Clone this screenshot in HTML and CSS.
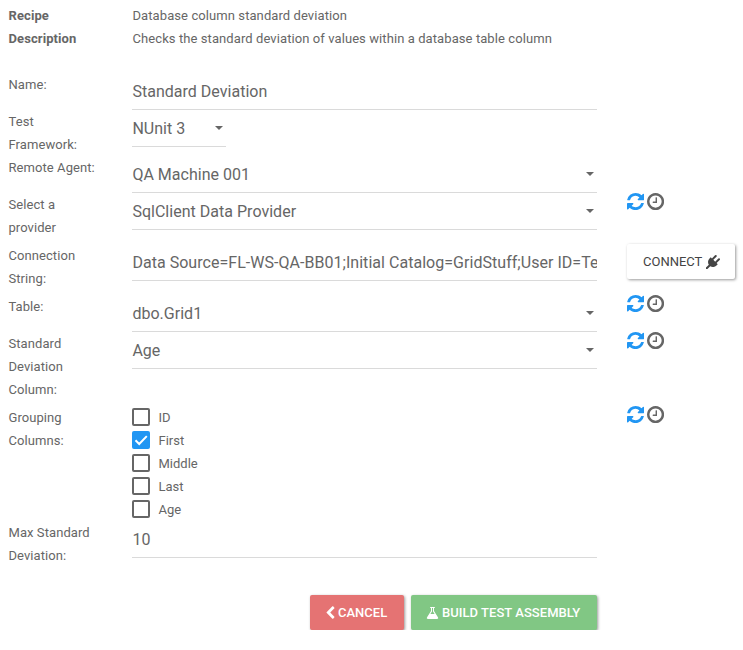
FILE: index.html
```
<!DOCTYPE html>
<html lang="en">
<head>
<meta charset="utf-8">
<title>Database column standard deviation</title>
<link rel="stylesheet" href="styles.css">
</head>
<body>
<svg class="defs" aria-hidden="true">
  <symbol id="refresh" viewBox="0 0 1536 1536"><path d="M1511 928q0 5-1 7-64 268-268 434.500t-478 166.500q-146 0-282.500-55t-243.500-157l-129 129q-19 19-45 19t-45-19-19-45v-448q0-26 19-45t45-19h448q26 0 45 19t19 45-19 45l-137 137q71 66 161 102t187 36q134 0 250-65t186-179q11-17 53-117 8-23 30-23h192q13 0 22.500 9.500t9.500 22.500zm25-800v448q0 26-19 45t-45 19h-448q-26 0-45-19t-19-45 19-45l138-138q-148-137-349-137-134 0-250 65t-186 179q-11 17-53 117-8 23-30 23h-199q-13 0-22.500-9.500t-9.500-22.500v-7q65-268 270-434.500t480-166.500q146 0 284 55.500t245 156.500l130-129q19-19 45-19t45 19 19 45z"/></symbol>
  <symbol id="clock" viewBox="128 128 1536 1536"><path d="M1024 544v448q0 14-9 23t-23 9h-320q-14 0-23-9t-9-23v-64q0-14 9-23t23-9h224v-352q0-14 9-23t23-9h64q14 0 23 9t9 23zm416 352q0-148-73-273t-198-198-273-73-273 73-198 198-73 273 73 273 198 198 273 73 273-73 198-198 73-273zm224 0q0 209-103 385.500t-279.500 279.500-385.500 103-385.500-103-279.500-279.500-103-385.500 103-385.500 279.500-279.500 385.500-103 385.500 103 279.500 279.500 103 385.500z"/></symbol>
  <symbol id="plug" viewBox="0 0 1792 1792"><path d="M1755 453q37 38 37 90.500t-37 90.500l-401 400 150 150-160 160q-163 163-389.500 186.500t-411.500-100.500l-362 362h-181v-181l362-362q-124-185-100.500-411.500t186.500-389.500l160-160 150 150 400-401q38-37 91-37t90 37 37 90.500-37 90.500l-400 401 234 234 401-400q38-37 91-37t90 37z"/></symbol>
  <symbol id="chevron" viewBox="384 0 1088 1792"><path d="M1427 301l-531 531 531 531q19 19 19 45t-19 45l-166 166q-19 19-45 19t-45-19l-742-742q-19-19-19-45t19-45l742-742q19-19 45-19t45 19l166 166q19 19 19 45t-19 45z"/></symbol>
  <symbol id="flask" viewBox="64 0 1664 1792"><path d="M1591 1448q56 89 21.500 152.500t-140.500 63.500h-1152q-106 0-140.500-63.500t21.500-152.500l503-793v-399h-64q-26 0-45-19t-19-45 19-45 45-19h512q26 0 45 19t19 45-19 45-45 19h-64v399zm-779-725l-192 301h552l-192-301-20-31v-436h-128v436z"/></symbol>
</svg>
<form class="recipe">
  <div class="row summary"><strong>Recipe</strong><span>Database column standard deviation</span></div>
  <div class="row summary summary-end"><strong>Description</strong><span>Checks the standard deviation of values within a database table column</span></div>

  <div class="row"><label>Name:</label><div class="field">Standard Deviation</div></div>
  <div class="row"><label>Test Framework:</label><div class="field select short">NUnit 3</div></div>
  <div class="row"><label>Remote Agent:</label><div class="field select">QA Machine 001</div></div>
  <div class="row spaced"><label>Select a provider</label><div class="field select">SqlClient Data Provider</div>
    <div class="actions"><svg class="reload"><use href="#refresh"/></svg><svg><use href="#clock"/></svg></div></div>
  <div class="row spaced"><label>Connection String:</label><div class="field connection">Data Source=FL-WS-QA-BB01;Initial Catalog=GridStuff;User ID=Test</div>
    <button type="button" class="btn connect">CONNECT <svg class="plug"><use href="#plug"/></svg></button></div>
  <div class="row"><label>Table:</label><div class="field select">dbo.Grid1</div>
    <div class="actions"><svg class="reload"><use href="#refresh"/></svg><svg><use href="#clock"/></svg></div></div>
  <div class="row spaced"><label>Standard Deviation Column:</label><div class="field select">Age</div>
    <div class="actions"><svg class="reload"><use href="#refresh"/></svg><svg><use href="#clock"/></svg></div></div>
  <div class="row"><label>Grouping Columns:</label>
    <div class="checks">
      <label class="check"><span class="box"></span>ID</label>
      <label class="check"><span class="box on"><svg viewBox="0 0 18 18"><path d="M3.500 9.300l3.700 3.700 7.600-7.900"/></svg></span>First</label>
      <label class="check"><span class="box"></span>Middle</label>
      <label class="check"><span class="box"></span>Last</label>
      <label class="check"><span class="box"></span>Age</label>
    </div>
    <div class="actions"><svg class="reload"><use href="#refresh"/></svg><svg><use href="#clock"/></svg></div></div>
  <div class="row"><label>Max Standard Deviation:</label><div class="field">10</div></div>

  <div class="footer">
    <button type="button" class="btn cancel"><svg class="chevron"><use href="#chevron"/></svg>CANCEL</button>
    <button type="button" class="btn build"><svg class="flask"><use href="#flask"/></svg>BUILD TEST ASSEMBLY</button>
  </div>
</form>
</body>
</html>
```
FILE: styles.css
```
body {
  margin: 0;
  background: #fff;
  color: #666;
  font: 13px/23px Roboto, sans-serif;
  overflow: hidden;
}

.defs {
  display: none;
}

.recipe {
  padding: 4px 0 0 8px;
}

.row {
  display: grid;
  grid-template-columns: 94px 465px 109px;
  column-gap: 30px;
  align-items: start;
}

.row > label {
  padding-left: 0.500px;
  letter-spacing: 0.070px;
}

.row strong {
  padding-left: 0.500px;
  font-weight: 700;
  letter-spacing: 0.090px;
}

.summary span {
  padding-left: 0.500px;
  letter-spacing: 0.085px;
}

.summary-end {
  margin-bottom: 23px;
}

.spaced {
  padding-bottom: 5px;
}

.field {
  box-sizing: border-box;
  height: 37px;
  padding-left: 0.400px;
  border-bottom: 1px solid #dadada;
  font-size: 16px;
  line-height: 38px;
  letter-spacing: 0.020px;
  white-space: nowrap;
  overflow: hidden;
}

.connection {
  letter-spacing: 0.035px;
}

.select {
  display: flex;
  justify-content: space-between;
  align-items: flex-start;
  padding-right: 3px;
}

.select::after {
  content: "";
  width: 8px;
  height: 4px;
  margin-top: 16px;
  background: #666;
  clip-path: polygon(0 0, 100% 0, 50% 100%);
}

.short {
  width: 94px;
}

.actions {
  display: flex;
  gap: 3px;
}

.actions svg {
  width: 17.140px;
  height: 17.140px;
  fill: #666;
}

.actions .reload {
  fill: #2196f3;
}

.check {
  display: flex;
  align-items: flex-start;
  gap: 8.500px;
}

.box {
  box-sizing: border-box;
  width: 18px;
  height: 18px;
  margin-top: 2px;
  border: 2px solid #666;
  border-radius: 2px;
}

.box.on {
  border: 0;
  background: #2196f3;
}

.box svg {
  display: block;
  fill: none;
  stroke: #fff;
  stroke-width: 2;
}

.btn {
  display: flex;
  align-items: center;
  justify-content: flex-start;
  box-sizing: border-box;
  height: 35px;
  padding: 0 0 0 16px;
  border: 0;
  border-radius: 2px;
  box-shadow: 1px 1px 3px rgba(0, 0, 0, 0.400);
  color: #fff;
  font: 500 13px/35px Roboto, sans-serif;
  white-space: nowrap;
}

.btn svg {
  flex: none;
  fill: currentColor;
  height: 14px;
}

.connect {
  width: 108px;
  background: #fff;
  color: #444;
  font-weight: 400;
}

.btn .plug {
  width: 14px;
  margin-left: 4px;
}

.footer {
  display: flex;
  justify-content: flex-end;
  gap: 7px;
  width: 589px;
  margin-top: 28px;
}

.cancel {
  width: 94px;
  background: #e57373;
}

.btn .chevron {
  width: 9px;
  margin-right: 3px;
}

.build {
  width: 186px;
  padding-left: 15px;
  background: #81c784;
  letter-spacing: 0.040px;
}

.btn .flask {
  width: 13px;
  margin-right: 3px;
}
```
